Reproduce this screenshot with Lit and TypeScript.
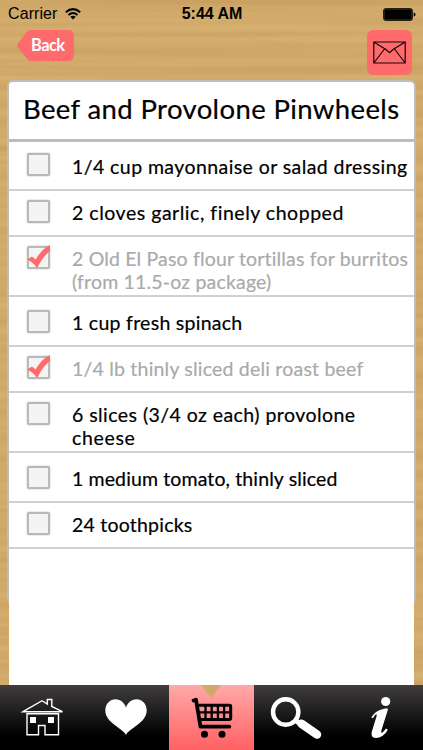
import { LitElement, html, svg, css } from "lit";
import { customElement } from "lit/decorators.js";
import { classMap } from "lit/directives/class-map.js";

type Line = { text: string; width: number };
type Item = { lines: Line[]; done?: boolean; height: number; boxTop: number; textTop: number };

const items: Item[] = [
  { lines: [{ text: "1/4 cup mayonnaise or salad dressing", width: 335 }], height: 49, boxTop: 11, textTop: 13 },
  { lines: [{ text: "2 cloves garlic, finely chopped", width: 271 }], height: 46, boxTop: 9, textTop: 10 },
  {
    lines: [
      { text: "2 Old El Paso flour tortillas for burritos", width: 336 },
      { text: "(from 11.5-oz package)", width: 199 },
    ],
    done: true, height: 60, boxTop: 9, textTop: 10,
  },
  { lines: [{ text: "1 cup fresh spinach", width: 170 }], height: 50, boxTop: 13, textTop: 14 },
  { lines: [{ text: "1/4 lb thinly sliced deli roast beef", width: 291 }], done: true, height: 46, boxTop: 9, textTop: 10 },
  {
    lines: [
      { text: "6 slices (3/4 oz each) provolone", width: 283 },
      { text: "cheese", width: 63 },
    ],
    height: 60, boxTop: 9, textTop: 10,
  },
  { lines: [{ text: "1 medium tomato, thinly sliced", width: 265 }], height: 50, boxTop: 13, textTop: 14 },
  { lines: [{ text: "24 toothpicks", width: 120 }], height: 46, boxTop: 9, textTop: 10 },
];

const house = svg`<svg width="84" height="65" viewBox="0 0 84 65" fill="none" stroke="#fff" stroke-width="1.4">
  <path d="M23 26.700 42 15.700 47.300 19V14.500h4.500v7L62.500 26.700z"/>
  <path d="M27 28.700V49.700h11.500V40.500h6.500V49.700H58.500V28.700z"/>
  <path d="M30 32h6v6h-6zM48 32h6v6h-6z" fill="#fff" stroke="none"/></svg>`;
const heart = svg`<svg width="84" height="65" viewBox="0 0 84 65" fill="#fff">
  <path d="M42 50C39.500 43.500 21.300 38 21.300 25.500C21.300 12 38 10 42 22.500C46 10 62.700 12 62.700 25.500C62.700 38 44.500 43.500 42 50z"/></svg>`;
const cart = svg`<svg width="85" height="65" viewBox="0 0 85 65" fill="none" stroke="#000" stroke-width="3.800" stroke-linecap="round" stroke-linejoin="round">
  <path d="M24.500 15.500 27 14.800 31.500 41.700H60.300"/>
  <path d="M30 20.300H60.500Q61.700 20.300 61.700 21.500V33Q61.700 34.500 60 34.500H32" stroke-width="3"/>
  <path d="M31 27.400H61M36.500 20.500V34.500M42.700 20.500V34.500M48.900 20.500V34.500M55.100 20.500V34.500" stroke-width="2.300"/>
  <circle cx="35.500" cy="49.300" r="3.500" fill="#000" stroke="none"/><circle cx="53" cy="49.300" r="3.500" fill="#000" stroke="none"/></svg>`;
const search = svg`<svg width="85" height="65" viewBox="0 0 85 65" fill="none" stroke="#fff">
  <circle cx="31.700" cy="27" r="12.700" stroke-width="4.400"/>
  <path d="M41 35 45 38" stroke-width="5"/>
  <path d="M47.500 38.700 63 49.500" stroke-width="8.500" stroke-linecap="round"/></svg>`;
const info = svg`<svg width="85" height="65" viewBox="0 0 85 65" fill="#fff">
  <circle cx="47.700" cy="16.500" r="4.600"/>
  <path d="M33.300 32.500C36.500 27 41 24.500 49 23.200Q50.300 23.200 49.500 26L43.500 45C42.500 49 44.500 48.500 48 43.500L49.800 44.800C46.500 50.500 42.500 53 38 53C33.500 53 33 49.500 34 46L38.500 31.500C39.300 28 37.500 28.500 35 33.300z"/></svg>`;

@customElement("app-root")
export class AppRoot extends LitElement {
  static styles = css`
    :host {
      display: flex;
      flex-direction: column;
      position: relative;
      width: 423px;
      height: 750px;
      overflow: hidden;
      background: #d1aa69;
      font-family: Lato, "Open Sans", sans-serif;
      color: #000;
    }
    * { box-sizing: border-box; }
    svg { display: block; }
    .wood { position: absolute; inset: 0; }
    .status, .nav, .sheet, .tabs { position: relative; flex: none; }
    .status {
      height: 28px;
      display: grid;
      grid-template-columns: 1fr auto 1fr;
      align-items: center;
      padding: 0 7px 0 8px;
      font: 16px/28px "Liberation Sans", Arial, sans-serif;
    }
    .carrier { display: flex; align-items: center; gap: 7px; }
    .clock { font-weight: 700; }
    .power { justify-self: end; }
    .nav {
      height: 52px;
      display: flex;
      justify-content: space-between;
      align-items: flex-start;
      padding: 2px 11px 0 17px;
    }
    .back {
      display: flex;
      width: 57px;
      height: 31px;
      padding-left: 14px;
      background: linear-gradient(#ff6b6d, #ff6b6d) right / 44px 100% no-repeat;
      border-radius: 0 5px 5px 0;
      position: relative;
      font: 700 16.500px/30px Lato, sans-serif;
      color: #fff;
    }
    .back svg { position: absolute; left: 0; top: 0; }
    .back span { position: relative; }
    .mail {
      width: 45px;
      height: 45px;
      border-radius: 6px;
      background: #ff6b6d;
      display: grid;
      place-items: center;
    }
    .sheet {
      width: 409px;
      height: 605px;
      margin-left: 7px;
    }
    .edge {
      position: absolute;
      inset: 0 0 auto 0;
      height: 525px;
      border: 2px solid #bcbcbc;
      border-bottom-color: transparent;
      border-radius: 6px;
      background: #fff;
    }
    .body {
      position: relative;
      height: 605px;
      margin: 0 2px;
      background: linear-gradient(#fff, #fff) 0 10px / 100% 100% no-repeat;
    }
    .title {
      margin: 0;
      height: 62px;
      padding: 0 0 0 14px;
      border-bottom: 3px solid #bcbcbc;
      font-size: 27.500px;
      font-weight: 400;
      line-height: 57px;
      white-space: nowrap;
      -webkit-text-stroke: 0.200px;
    }
    .row {
      display: flex;
      align-items: flex-start;
      padding-left: 18px;
      border-bottom: 2px solid #d0d0d0;
      font-size: 19.500px;
      line-height: 23px;
      -webkit-text-stroke: 0.200px;
    }
    .row.done { color: #aaa; }
    .box {
      flex: none;
      width: 23px;
      height: 23px;
      border: 2px solid #b9b9b9;
      border-radius: 2px;
      background: #f4f4f4;
      box-shadow: 0 0 2px #bbb;
    }
    .box svg { margin: -3px 0 0 -2px; overflow: visible; }
    .words { padding-left: 22px; white-space: nowrap; }
    .line { display: block; }
    .line span { display: inline-block; }
    .tabs {
      height: 65px;
      display: grid;
      grid-template-columns: 84px 85px 85px 84px 85px;
      background: linear-gradient(#403d3e, #000 78%);
    }
    .tab { position: relative; overflow: hidden; }
    .tab.active { background: linear-gradient(#ffa9a8, #ff6163); }
    .notch {
      position: absolute;
      left: 32px;
      top: 0;
      border: 10.500px solid transparent;
      border-top: 13px solid #d1aa69;
      border-bottom: 0;
    }
  `;

  // Spreads the tracking so that every line fills its measure.
  firstUpdated() {
    this.renderRoot.querySelectorAll<HTMLElement>("[data-measure]").forEach((el) => {
      const natural = el.getBoundingClientRect().width;
      const count = (el.textContent ?? "").length;
      el.style.letterSpacing = `${(Number(el.dataset.measure) + 0.5 - natural) / count}px`;
    });
  }

  private row(item: Item) {
    return html`<div class=${classMap({ row: true, done: !!item.done })} style="height:${item.height}px">
      <div class="box" style="margin-top:${item.boxTop}px">
        ${item.done
          ? html`<svg width="24" height="24" viewBox="0 0 24 24"><path fill="#ff6b6d" d="M0 14.500 5 11.500 8.700 14.500C13 7 17 3 23 0V6C18 10 14.500 14.500 10.500 22.500H9.500C7 18.500 4 16.500 0 14.500z"/></svg>`
          : null}
      </div>
      <div class="words" style="padding-top:${item.textTop}px">
        ${item.lines.map((l) => html`<div class="line"><span data-measure=${l.width}>${l.text}</span></div>`)}
      </div>
    </div>`;
  }

  render() {
    return html`
      <svg class="wood" width="423" height="750">
        <filter id="grain" x="0" y="0" width="100%" height="100%" color-interpolation-filters="sRGB">
          <feTurbulence type="fractalNoise" baseFrequency="0.002 0.11" numOctaves="2" seed="5" />
          <feColorMatrix values="0 0 0 0 .77  0 0 0 0 .61  0 0 0 0 .36  1.300 0 0 0 -.35" />
        </filter>
        <rect width="423" height="750" fill="#d6b070" />
        <rect width="423" height="750" filter="url(#grain)" />
      </svg>
      <header class="status">
        <div class="carrier"><span data-measure="49">Carrier</span>
          <svg width="16" height="12" viewBox="0 0 16 12" fill="none" stroke="#000" stroke-width="2">
            <path d="M.8 4.200Q8-2 15.200 4.200M3.500 7Q8 3 12.500 7" /><path d="M8 11.500 5.300 8.800Q8 6.700 10.700 8.800z" fill="#000" stroke="none" />
          </svg>
        </div>
        <div class="clock"><span data-measure="60">5:44 AM</span></div>
        <svg class="power" width="33" height="13" viewBox="0 0 33 13">
          <rect x=".6" y=".6" width="28.800" height="11.800" rx="2" fill="#4c4029" stroke="#1c170e" />
          <rect x="1.500" y="1.500" width="27" height="10" rx="1" /><path d="M30.700 4.500Q32.500 4.500 32.500 6.500T30.700 8.500z" />
        </svg>
      </header>
      <nav class="nav">
        <div class="back">
          <svg width="14" height="31" viewBox="0 0 14 31"><path fill="#ff6b6d" d="M14 0H13Q11 0 10 1.500L.5 14Q-.3 15.500 .5 17L10 29Q11.500 31 13.500 31H14z" /></svg>
          <span data-measure="33">Back</span>
        </div>
        <div class="mail">
          <svg width="33" height="23" viewBox="0 0 33 23" fill="none" stroke="#170405" stroke-width="1.200">
            <path d="M.8 1H32.200V22H.8zM.8 1 13 8.500 16.500 11.700 20 8.500 32.200 1M11.500 8 .8 22M21.500 8 32.200 22" />
          </svg>
        </div>
      </nav>
      <main class="sheet">
        <div class="edge"></div>
        <div class="body">
          <h1 class="title"><span data-measure="376">Beef and Provolone Pinwheels</span></h1>
          ${items.map((i) => this.row(i))}
        </div>
      </main>
      <footer class="tabs">
        <div class="tab">${house}</div>
        <div class="tab">${heart}</div>
        <div class="tab active"><div class="notch"></div>${cart}</div>
        <div class="tab">${search}</div>
        <div class="tab">${info}</div>
      </footer>
    `;
  }
}
